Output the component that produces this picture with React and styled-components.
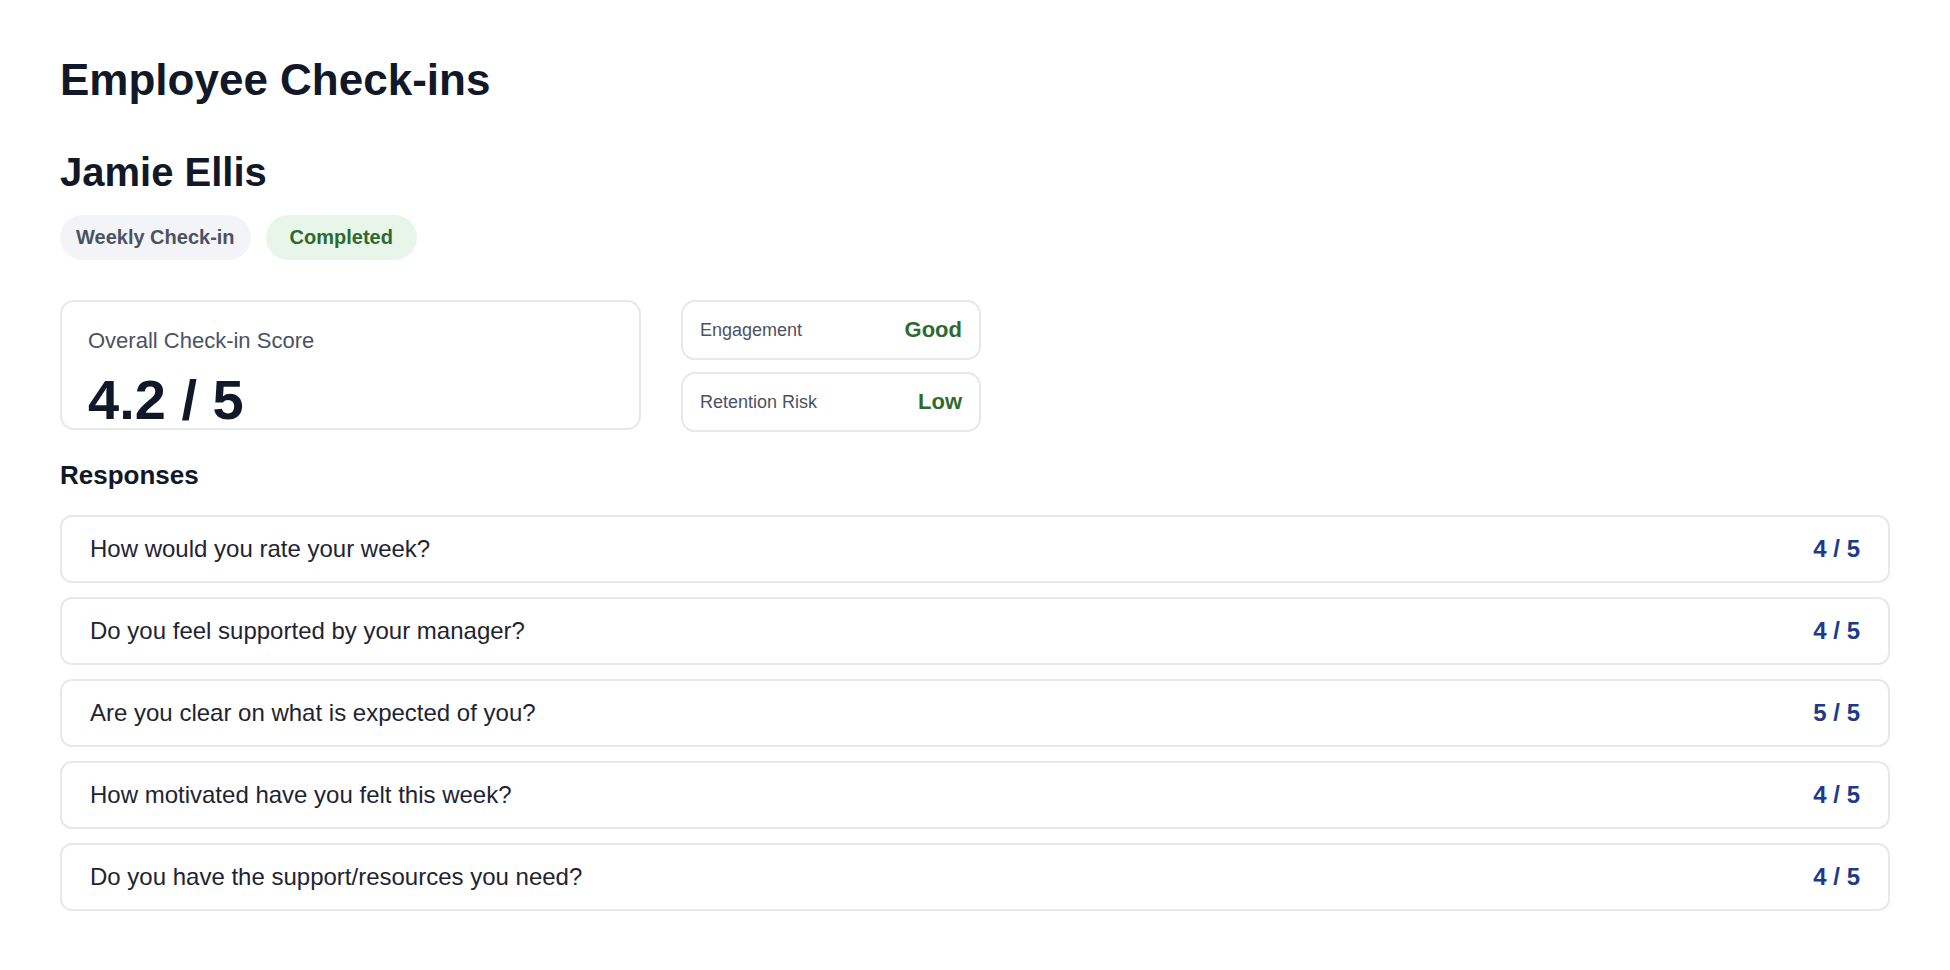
import React from "react";
import styled, { createGlobalStyle } from "styled-components";

const GlobalStyle = createGlobalStyle`
  * { box-sizing: border-box; }
  html, body { margin: 0; padding: 0; background: #ffffff; }
  body {
    font-family: "Liberation Sans", Arial, Helvetica, sans-serif;
    color: #111827;
  }
`;

const Page = styled.main`
  padding: 54px 60px 40px;
  display: flex;
  flex-direction: column;
`;

const Title = styled.h1`
  margin: 0;
  font-size: 44px;
  line-height: 52px;
  font-weight: 700;
  color: #111827;
`;

const Name = styled.h2`
  margin: 42px 0 0;
  font-size: 40px;
  line-height: 48px;
  font-weight: 700;
  color: #111827;
`;

const Tags = styled.div`
  display: flex;
  gap: 15px;
  margin-top: 19px;
`;

const Tag = styled.span`
  display: inline-flex;
  align-items: center;
  height: 45px;
  padding: 0 ${(p) => (p.$tone === "success" ? "24px" : "16px")};
  border-radius: 999px;
  font-size: 20px;
  line-height: 45px;
  font-weight: 700;
  background: ${(p) => (p.$tone === "success" ? "#e8f5e9" : "#f3f4f8")};
  color: ${(p) => (p.$tone === "success" ? "#2e6a30" : "#4b5263")};
`;

const Summary = styled.section`
  display: grid;
  grid-template-columns: 581px 300px;
  gap: 40px;
  align-items: start;
  margin-top: 40px;
`;

const ScoreCard = styled.div`
  border: 2px solid #e7e8ec;
  border-radius: 14px;
  padding: 26px 26px 0;
  height: 130px;
  overflow: hidden;
`;

const ScoreLabel = styled.div`
  font-size: 22px;
  line-height: 26px;
  color: #4b5263;
`;

const ScoreValue = styled.div`
  margin-top: 18px;
  font-size: 56px;
  line-height: 56px;
  font-weight: 700;
  color: #111827;
`;

const StatList = styled.div`
  display: flex;
  flex-direction: column;
  gap: 12px;
`;

const StatCard = styled.div`
  display: flex;
  align-items: center;
  justify-content: space-between;
  height: 60px;
  padding: 0 17px;
  border: 2px solid #e7e8ec;
  border-radius: 14px;
`;

const StatLabel = styled.span`
  font-size: 18px;
  color: #4b5263;
`;

const StatValue = styled.span`
  font-size: 22px;
  font-weight: 700;
  color: #2e6a30;
`;

const SectionTitle = styled.h3`
  margin: 27px 0 0;
  font-size: 26px;
  line-height: 32px;
  font-weight: 700;
  color: #111827;
`;

const ResponseList = styled.ul`
  list-style: none;
  margin: 24px 0 0;
  padding: 0;
  display: flex;
  flex-direction: column;
  gap: 14px;
`;

const ResponseRow = styled.li`
  display: flex;
  align-items: center;
  justify-content: space-between;
  height: 68px;
  padding: 0 28px;
  border: 2px solid #e7e8ec;
  border-radius: 12px;
`;

const Question = styled.span`
  font-size: 24px;
  color: #1f2433;
`;

const Answer = styled.span`
  font-size: 24px;
  font-weight: 700;
  color: #1e3a8a;
`;

const responses = [
  { q: "How would you rate your week?", a: 4 },
  { q: "Do you feel supported by your manager?", a: 4 },
  { q: "Are you clear on what is expected of you?", a: 5 },
  { q: "How motivated have you felt this week?", a: 4 },
  { q: "Do you have the support/resources you need?", a: 4 },
];

export default function App() {
  return (
    <>
      <GlobalStyle />
      <Page>
        <Title>Employee Check-ins</Title>
        <Name>Jamie Ellis</Name>
        <Tags>
          <Tag>Weekly Check-in</Tag>
          <Tag $tone="success">Completed</Tag>
        </Tags>
        <Summary>
          <ScoreCard>
            <ScoreLabel>Overall Check-in Score</ScoreLabel>
            <ScoreValue>4.2 / 5</ScoreValue>
          </ScoreCard>
          <StatList>
            <StatCard>
              <StatLabel>Engagement</StatLabel>
              <StatValue>Good</StatValue>
            </StatCard>
            <StatCard>
              <StatLabel>Retention Risk</StatLabel>
              <StatValue>Low</StatValue>
            </StatCard>
          </StatList>
        </Summary>
        <SectionTitle>Responses</SectionTitle>
        <ResponseList>
          {responses.map((r) => (
            <ResponseRow key={r.q}>
              <Question>{r.q}</Question>
              <Answer>{r.a} / 5</Answer>
            </ResponseRow>
          ))}
        </ResponseList>
      </Page>
    </>
  );
}
